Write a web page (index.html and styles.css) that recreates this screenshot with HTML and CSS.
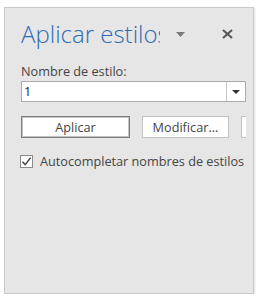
FILE: index.html
```html
<!DOCTYPE html>
<html lang="es">
<head>
<meta charset="utf-8">
<link rel="stylesheet" href="styles.css">
</head>
<body>
<div class="pane">
  <div class="header">
    <div class="title">Aplicar estilos</div>
    <svg class="menu-arrow" width="9" height="5" viewBox="0 0 9 5"><polygon points="0,0 9,0 4.5,5" fill="#7a7a7a"/></svg>
    <svg class="close" width="11" height="10" viewBox="0 0 11 10"><path d="M1 1 L10 9 M10 1 L1 9" stroke="#555" stroke-width="2"/></svg>
  </div>
  <div class="label">Nombre de estilo:</div>
  <div class="combo">
    <div class="combo-value">1</div>
    <div class="combo-btn"><svg width="8" height="4" viewBox="0 0 8 4"><polygon points="0,0 8,0 4,4" fill="#333"/></svg></div>
  </div>
  <div class="buttons">
    <div class="btn btn-default">Aplicar</div>
    <div class="btn btn-mod">Modificar...</div>
    <div class="btn btn-extra"></div>
  </div>
  <div class="check-row">
    <div class="checkbox"><svg width="11" height="11" viewBox="0 0 11 11"><path d="M1.5 5.8 L4.2 8.6 L9.6 1.8" fill="none" stroke="#444" stroke-width="1.4"/></svg></div>
    <div class="check-label">Autocompletar nombres de estilos</div>
  </div>
</div>
</body>
</html>
```

FILE: styles.css
```css
html, body {
  margin: 0;
  padding: 0;
  background: #ffffff;
}
body {
  font-family: "Open Sans", "Noto Sans", sans-serif;
  color: #444;
}
.pane {
  box-sizing: border-box;
  margin: 7px 0 0 4px;
  width: 250px;
  height: 287px;
  background: #e6e6e6;
  border: 1px solid #c9c9c9;
  box-shadow: 1px 1px 2px rgba(0,0,0,0.12);
  padding: 0 7px 0 16px;
  overflow: hidden;
}
.header {
  display: flex;
  align-items: center;
  height: 30px;
  margin-top: 11px;
}
.title {
  flex: none;
  width: 139px;
  overflow: hidden;
  white-space: nowrap;
  font-size: 24px;
  font-weight: 300;
  color: #2f6cb5;
  line-height: 30px;
}
.menu-arrow {
  flex: none;
  margin-left: 16px;
}
.close {
  flex: none;
  margin-left: 37px;
  margin-top: -1px;
}
.label {
  margin-top: 14px;
  font-size: 12.7px;
  line-height: 16px;
  color: #444;
}
.combo {
  margin-top: 2px;
  display: flex;
  height: 21px;
  box-sizing: border-box;
  border: 1px solid #ababab;
  background: #fff;
}
.combo-value {
  flex: 1;
  font-size: 12.7px;
  line-height: 19px;
  padding-left: 2px;
  color: #222;
}
.combo-btn {
  width: 18px;
  border-left: 1px solid #c6c6c6;
  display: flex;
  align-items: center;
  justify-content: center;
}
.buttons {
  display: flex;
  gap: 12px;
  margin-top: 14px;
  overflow: hidden;
  white-space: nowrap;
}
.btn {
  flex: none;
  box-sizing: border-box;
  height: 22px;
  background: #fff;
  font-size: 12.7px;
  line-height: 20px;
  text-align: center;
  color: #444;
}
.btn-default {
  width: 109px;
  border: 1px solid #7c7c7c;
  box-shadow: inset 0 0 0 1px #c4c4c4;
}
.btn-mod {
  width: 87px;
  border: 1px solid #c2c2c2;
}
.btn-extra {
  width: 90px;
  border: 1px solid #c2c2c2;
}
.check-row {
  display: flex;
  align-items: center;
  margin-top: 15px;
  margin-left: -1px;
}
.checkbox {
  flex: none;
  box-sizing: border-box;
  width: 13px;
  height: 13px;
  border: 1px solid #8a8a8a;
  background: #fff;
  display: flex;
  align-items: center;
  justify-content: center;
}
.check-label {
  margin-left: 7px;
  font-size: 12.7px;
  line-height: 16px;
  color: #444;
  white-space: nowrap;
}
```
